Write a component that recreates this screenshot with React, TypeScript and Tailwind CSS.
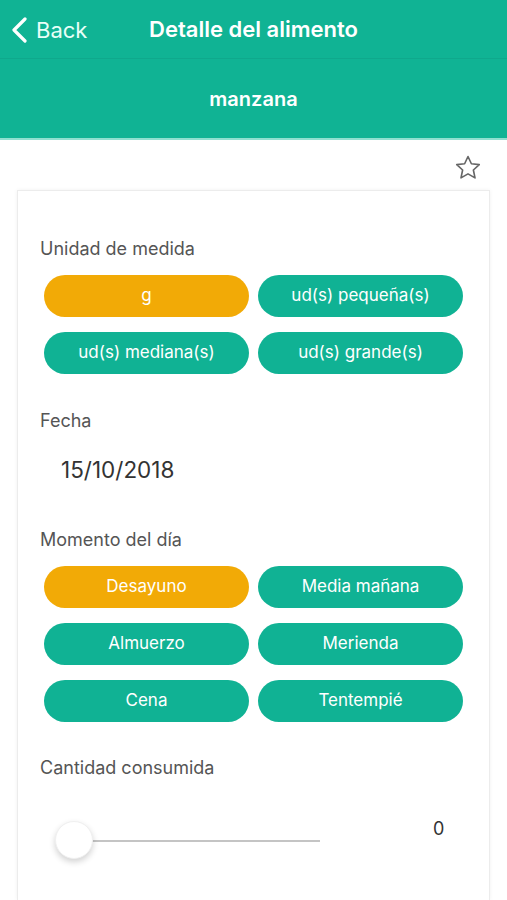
const UNITS = ['g', 'ud(s) pequeña(s)', 'ud(s) mediana(s)', 'ud(s) grande(s)'];
const MOMENTS = ['Desayuno', 'Media mañana', 'Almuerzo', 'Merienda', 'Cena', 'Tentempié'];

const ChoiceGrid = ({ items, active }: { items: string[]; active: string }): JSX.Element => (
  <div className="mx-[4px] grid grid-cols-2 gap-x-[9px] gap-y-[15px]">
    {items.map((item) => (
      <button
        key={item}
        className={
          item === active
            ? 'h-[42px] rounded-full bg-[#f2aa06] text-[17px] text-white'
            : 'h-[42px] rounded-full bg-[#10b294] text-[17px] text-white'
        }
      >
        {item}
      </button>
    ))}
  </div>
);

const SectionLabel = ({ children }: { children: string }): JSX.Element => (
  <div className="text-[18px] leading-[22px] text-[#555]">{children}</div>
);

export default function App(): JSX.Element {
  return (
    <div className="flex h-[900px] w-[507px] flex-col overflow-hidden bg-white font-['Inter',sans-serif]">
      <header className="bg-[#10b394] text-white">
        <div className="relative flex h-[59px] items-center border-b border-[#0fa88c]">
          <div className="absolute left-[10px] top-[17px] flex items-center gap-[6px]">
            <svg width="20" height="26" viewBox="0 0 20 26" fill="none">
              <path d="M15 2 L4 13 L15 24" stroke="white" strokeWidth="3.2" strokeLinecap="round" strokeLinejoin="round" />
            </svg>
            <span className="text-[22px] leading-[26px] text-[#e8fff8]">Back</span>
          </div>
          <div className="w-full text-center text-[22px] font-semibold leading-[26px]">Detalle del alimento</div>
        </div>
        <div className="flex h-[81px] items-center justify-center border-b-2 border-[#8fe0d0] text-[20px] font-semibold">
          manzana
        </div>
      </header>

      <div className="flex h-[50px] justify-end pr-[24px] pt-[13px]">
        <svg width="30" height="30" viewBox="0 0 24 24" fill="none">
          <path
            d="M12 2.8 L14.7 8.6 L21 9.3 L16.3 13.6 L17.6 19.9 L12 16.7 L6.4 19.9 L7.7 13.6 L3 9.3 L9.3 8.6 Z"
            stroke="#666"
            strokeWidth="1.3"
            strokeLinejoin="round"
          />
        </svg>
      </div>

      <main className="mx-[17px] flex-1 border-x border-t border-[#ececec] px-[22px] pt-[47px] shadow-[0_0_4px_rgba(0,0,0,0.06)]">
        <SectionLabel>Unidad de medida</SectionLabel>
        <div className="mt-[15px]">
          <ChoiceGrid items={UNITS} active="g" />
        </div>

        <div className="mt-[36px]">
          <SectionLabel>Fecha</SectionLabel>
        </div>
        <div className="mt-[24px] pl-[21px] text-[22.5px] leading-[28px] text-[#333]">15/10/2018</div>

        <div className="mt-[45px]">
          <SectionLabel>Momento del día</SectionLabel>
        </div>
        <div className="mt-[15px]">
          <ChoiceGrid items={MOMENTS} active="Desayuno" />
        </div>

        <div className="mt-[35px]">
          <SectionLabel>Cantidad consumida</SectionLabel>
        </div>
        <div className="mt-[41px] flex items-start">
          <div className="relative ml-[15px] h-[40px] w-[265px]">
            <div className="absolute left-[36px] right-0 top-[20px] h-[2px] bg-[#c4c4c4]" />
            <div className="absolute left-0 top-[1px] h-[38px] w-[38px] rounded-full border border-[#f0f0f0] bg-white shadow-[0_3px_6px_rgba(0,0,0,0.18)]" />
          </div>
          <div className="ml-[113px] mt-[-3px] text-[18px] leading-[24px] text-[#333]">0</div>
        </div>
      </main>
    </div>
  );
}
